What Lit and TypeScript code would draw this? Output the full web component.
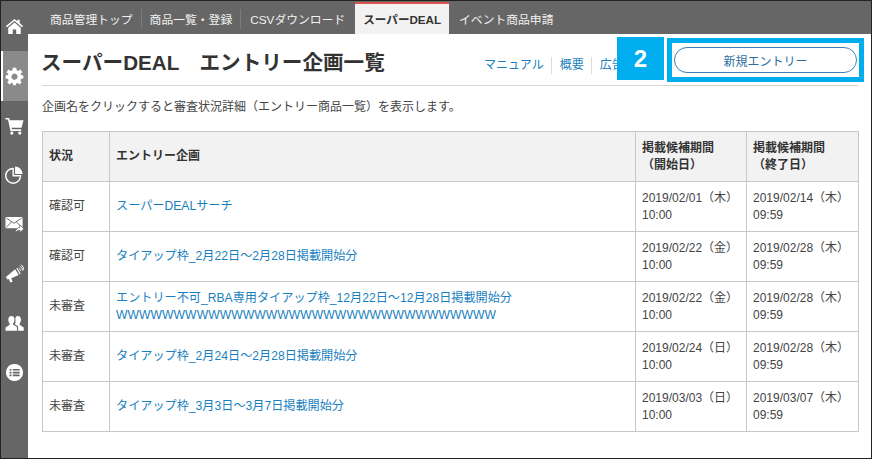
import { LitElement, html, css, svg } from "lit";
import { customElement } from "lit/decorators.js";

const icons = [
  svg`<path d="M10 2 L13.2 4.6 V2.8 H15.4 V6.4 L19 9.4 L17.9 10.7 L10 4.2 L2.1 10.7 L1 9.4 Z"/><path d="M10 5.8 L16.6 11.2 V18 H11.8 V13.2 H8.2 V18 H3.4 V11.2 Z"/>`,
  svg`<path fill-rule="evenodd" d="M8.2 1.5 H11.8 L12.3 4 L14 4.8 L16.2 3.4 L18.4 6.2 L16.5 7.9 L16.8 9.1 L19.3 9.6 V12.7 L16.8 13.2 L16.2 14.8 L17.6 16.9 L15 19 L13.3 17.4 L11.8 18 L11.4 20 H8.6 L8.2 18 L6.7 17.4 L5 19 L2.4 16.9 L3.8 14.8 L3.2 13.2 L.7 12.7 V9.6 L3.2 9.1 L3.5 7.9 L1.6 6.2 L3.8 3.4 L6 4.8 L7.7 4 Z M10 7.6 A3.3 3.3 0 1 0 10.01 7.6 Z" transform="translate(0 -.7)"/>`,
  svg`<path d="M.5 2 H4.4 L5 4.4 H19.5 L17.4 12.4 H6.9 L7.3 14 H17 V15.8 H5.8 L3.1 3.8 H.5 Z"/><circle cx="7.2" cy="18" r="1.7"/><circle cx="15.6" cy="18" r="1.7"/>`,
  svg`<path d="M8.6 3.6 V11.4 H16.4 A7.8 7.8 0 1 1 8.6 3.6 Z" fill="none" stroke="#fff" stroke-width="1.5"/><path d="M10.6 1.5 A8 8 0 0 1 18.5 9.4 H10.6 Z"/>`,
  svg`<rect x=".5" y="2" width="18" height="12" rx="1.2"/><path d="M1.5 3.2 L9.5 8.8 L17.5 3.2 M1.5 12.8 L7 7.4 M17.5 12.8 L12 7.4" fill="none" stroke="#666" stroke-width="1"/><path d="M10.6 19 C11 15.4 13.2 13.2 15.6 13 V10.6 L20 14.6 L15.6 18.4 V16 C13.6 16 12 17 10.6 19 Z" stroke="#666" stroke-width=".8"/>`,
  svg`<path d="M1 13.8 L10.6 5.6 L14.4 11.6 L6.6 15 L8 18.8 L5.6 19.6 L4 15.8 L2.6 16.4 Z"/><path d="M11.8 4.6 L15.4 10.8 L16.5 10.2 L12.9 3.9 Z"/><path d="M14.4 4.2 A3.6 3.6 0 0 1 16.2 7.4 M15.6 2.2 A6 6 0 0 1 18.6 7 M17 .8 A8 8 0 0 1 20 6.4" fill="none" stroke="#fff" stroke-width="1"/>`,
  svg`<path d="M6.8 2 C9 2 10 3.7 10 6 C10 7.6 9.4 9 8.6 9.9 V11.3 L12.4 13.3 L12.8 17.5 H.6 V14.2 L4.9 11.4 V9.9 C4 9 3.5 7.6 3.5 6 C3.5 3.7 4.7 2 6.8 2 Z"/><path d="M13.5 2 C15.6 2 16.8 3.7 16.8 6 C16.8 7.6 16.2 9 15.4 9.9 V11.3 L19.7 14.2 V17.5 H13.9 L13.6 12.7 L10.5 11 C11 9.9 11.2 8 11 6 C10.8 4.5 11 2 13.5 2 Z"/>`,
  svg`<path fill-rule="evenodd" d="M10 1 A9 9 0 1 0 10.01 1 Z M4.8 6.2 H6.8 V8 H4.8 Z M8.2 6.2 H15.4 V8 H8.2 Z M4.8 9.2 H6.8 V11 H4.8 Z M8.2 9.2 H15.4 V11 H8.2 Z M4.8 12.2 H6.8 V14 H4.8 Z M8.2 12.2 H15.4 V14 H8.2 Z"/>`,
];

const rows: [string, string[], string, string, string, string][] = [
  ["確認可", ["スーパーDEALサーチ"], "2019/02/01（木）", "10:00", "2019/02/14（木）", "09:59"],
  ["確認可", ["タイアップ枠_2月22日～2月28日掲載開始分"], "2019/02/22（金）", "10:00", "2019/02/28（木）", "09:59"],
  ["未審査", ["エントリー不可_RBA専用タイアップ枠_12月22日～12月28日掲載開始分", "WWWWWWWWWWWWWWWWWWWWWWWWWWWWWWWWW"], "2019/02/22（金）", "10:00", "2019/02/28（木）", "09:59"],
  ["未審査", ["タイアップ枠_2月24日～2月28日掲載開始分"], "2019/02/24（日）", "10:00", "2019/02/28（木）", "09:59"],
  ["未審査", ["タイアップ枠_3月3日～3月7日掲載開始分"], "2019/03/03（日）", "10:00", "2019/03/07（木）", "09:59"],
];

@customElement("app-root")
export class AppRoot extends LitElement {
  static styles = css`
    :host {
      display: block;
      width: 873px;
      height: 459px;
      box-sizing: border-box;
      background: #fff;
      font-family: "Liberation Sans", "Noto Sans CJK JP", sans-serif;
      font-size: 12px;
      color: #444;
    }
    .frame {
      position: relative;
      box-sizing: border-box;
      width: 872px;
      height: 459px;
      border: 1px solid #222;
      display: grid;
      grid-template-columns: 27px 1fr;
      grid-template-rows: 33px 1fr;
    }
    .side {
      grid-row: 1 / 3;
      background: #666;
      display: flex;
      flex-direction: column;
      padding-top: 1px;
    }
    .side-item {
      height: 49.4px;
      display: flex;
      align-items: center;
      justify-content: center;
      flex: none;
      box-sizing: border-box;
    }
    .side-item.on {
      background: #8a8a8a;
      border-left: 2px solid #fff;
      padding-right: 2px;
    }
    .side-item svg { width: 19px; height: 19px; fill: #fff; }
    .tabs {
      background: #666;
      display: flex;
      align-items: stretch;
      padding: 1px 0 0 14px;
      font-size: 11.8px;
    }
    .tab {
      display: flex;
      align-items: center;
      padding: 0 9px 0 8px;
      position: relative;
      color: #f2f2f2;
    }
    .tab.sep::after {
      content: "";
      position: absolute;
      right: 0;
      top: 7px;
      bottom: 5px;
      width: 1px;
      background: #7c7c7c;
    }
    .tab.active {
      background: #f2f2f2;
      color: #333;
      font-weight: bold;
      font-size: 11.6px;
      border-top: 2px solid #d9534f;
      margin: 0 10px;
      padding: 0 8px;
    }
    .tab.csv { padding: 0 0 0 9px; }
    .tab.plain { padding: 0; }
    main { padding: 0 13px 0 14px; min-width: 0; }
    .head {
      height: 52px;
      box-sizing: border-box;
      border-bottom: 1px solid #d4d4d4;
      display: flex;
      align-items: center;
      justify-content: space-between;
      padding-top: 3px;
    }
    h1 {
      margin: 0 0 0 -1px;
      font-size: 20.6px;
      font-weight: bold;
      color: #333;
      white-space: pre;
    }
    .links {
      display: flex;
      color: #1a7fc0;
      width: 374px;
      padding-top: 9px;
      overflow: hidden;
      white-space: nowrap;
    }
    .links span { padding: 0 7px 0 8px; border-right: 1px solid #ddd; line-height: 17px; }
    .links span:first-child { padding-left: 0; }
    .links span:last-child { border-right: 0; }
    .note { margin: 12px 0 15px; line-height: 18px; color: #444; }
    table {
      border-collapse: collapse;
      table-layout: fixed;
      width: 816px;
      line-height: 17px;
    }
    th, td {
      border: 1px solid #c8c8c8;
      padding: 0 7px 0 6px;
      height: 50px;
      text-align: left;
      vertical-align: middle;
      box-sizing: border-box;
      white-space: nowrap;
    }
    th { background: #f2f2f2; font-weight: bold; color: #333; }
    td a {
      color: #1a7fc0;
      display: block;
      font-size: 12.15px;
      text-decoration: none;
    }
    td a + a { letter-spacing: .06px; }
    td { color: #444; }
    .badge {
      position: absolute;
      left: 616px;
      top: 36px;
      width: 47px;
      height: 43px;
      background: #00aeef;
      color: #fff;
      font-size: 24px;
      font-weight: bold;
      display: flex;
      align-items: center;
      justify-content: center;
    }
    .hilite {
      position: absolute;
      left: 666px;
      top: 37px;
      width: 197px;
      height: 44px;
      box-sizing: border-box;
      border: 5px solid #00aeef;
      background: #fff;
      padding: 4px 2px 4px 2px;
    }
    .hilite div {
      height: 100%;
      box-sizing: border-box;
      border: 1px solid #3b83b5;
      border-radius: 14px;
      display: flex;
      align-items: center;
      justify-content: center;
      color: #2a6f9f;
    }
  `;

  render() {
    return html`
      <div class="frame">
        <nav class="side">
          ${icons.map(
            (p, i) => html`<div class="side-item ${i === 1 ? "on" : ""}">
              <svg viewBox="0 0 20 20">${p}</svg>
            </div>`
          )}
        </nav>
        <div class="tabs">
          <div class="tab sep">商品管理トップ</div>
          <div class="tab sep">商品一覧・登録</div>
          <div class="tab csv">CSVダウンロード</div>
          <div class="tab active">スーパーDEAL</div>
          <div class="tab plain">イベント商品申請</div>
        </div>
        <main>
          <div class="head">
            <h1>スーパーDEAL　エントリー企画一覧</h1>
            <div class="links"><span>マニュアル</span><span>概要</span><span>広告</span></div>
          </div>
          <p class="note">企画名をクリックすると審査状況詳細（エントリー商品一覧）を表示します。</p>
          <table>
            <colgroup>
              <col style="width:67px" /><col style="width:526px" /><col style="width:111px" /><col style="width:112px" />
            </colgroup>
            <thead>
              <tr>
                <th>状況</th>
                <th>エントリー企画</th>
                <th>掲載候補期間<br />（開始日）</th>
                <th>掲載候補期間<br />（終了日）</th>
              </tr>
            </thead>
            <tbody>
              ${rows.map(
                (r) => html`<tr>
                  <td>${r[0]}</td>
                  <td>${r[1].map((t) => html`<a>${t}</a>`)}</td>
                  <td>${r[2]}<br />${r[3]}</td>
                  <td>${r[4]}<br />${r[5]}</td>
                </tr>`
              )}
            </tbody>
          </table>
        </main>
        <div class="badge">2</div>
        <div class="hilite"><div>新規エントリー</div></div>
      </div>
    `;
  }
}
